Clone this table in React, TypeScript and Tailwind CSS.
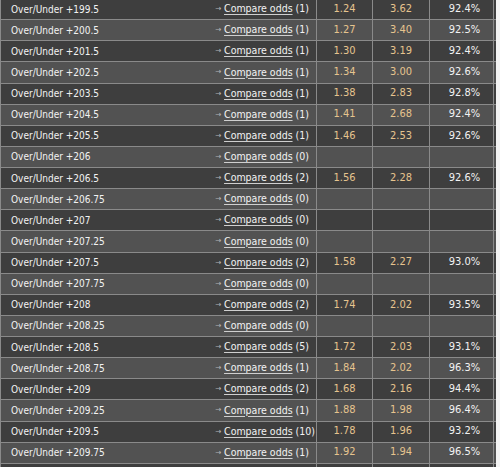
type Line = { pts: string; count: number; over?: string; under?: string; payout?: string };

const lines: Line[] = [
  { pts: "199.5", count: 1, over: "1.24", under: "3.62", payout: "92.4%" },
  { pts: "200.5", count: 1, over: "1.27", under: "3.40", payout: "92.5%" },
  { pts: "201.5", count: 1, over: "1.30", under: "3.19", payout: "92.4%" },
  { pts: "202.5", count: 1, over: "1.34", under: "3.00", payout: "92.6%" },
  { pts: "203.5", count: 1, over: "1.38", under: "2.83", payout: "92.8%" },
  { pts: "204.5", count: 1, over: "1.41", under: "2.68", payout: "92.4%" },
  { pts: "205.5", count: 1, over: "1.46", under: "2.53", payout: "92.6%" },
  { pts: "206", count: 0 },
  { pts: "206.5", count: 2, over: "1.56", under: "2.28", payout: "92.6%" },
  { pts: "206.75", count: 0 },
  { pts: "207", count: 0 },
  { pts: "207.25", count: 0 },
  { pts: "207.5", count: 2, over: "1.58", under: "2.27", payout: "93.0%" },
  { pts: "207.75", count: 0 },
  { pts: "208", count: 2, over: "1.74", under: "2.02", payout: "93.5%" },
  { pts: "208.25", count: 0 },
  { pts: "208.5", count: 5, over: "1.72", under: "2.03", payout: "93.1%" },
  { pts: "208.75", count: 1, over: "1.84", under: "2.02", payout: "96.3%" },
  { pts: "209", count: 2, over: "1.68", under: "2.16", payout: "94.4%" },
  { pts: "209.25", count: 1, over: "1.88", under: "1.98", payout: "96.4%" },
  { pts: "209.5", count: 10, over: "1.78", under: "1.96", payout: "93.2%" },
  { pts: "209.75", count: 1, over: "1.92", under: "1.94", payout: "96.5%" },
];

function OddsRow({ line, index }: { line?: Line; index: number }) {
  const bg = index % 2 === 0 ? "bg-[#3e3e3e]" : "bg-[#525252]";
  return (
    <div
      className={`grid h-[21.14px] grid-cols-[215px_101px_56px_57px_65px] border-b border-[#8a8a8a] ${bg}`}
    >
      <div className="flex items-center border-l border-[#8a8a8a] pl-[10px] text-[10px] text-[#f2f2f2]">
        {line && <>Over/Under +{line.pts}</>}
      </div>
      <div className="flex items-center whitespace-nowrap text-[10.5px] text-[#f2f2f2]">
        {line && (
          <>
            <span className="mr-[3px] text-[8px] text-[#b5b5b5]">&rarr;</span>
            <a href="#" className="underline decoration-[#cfcfcf] underline-offset-2">
              Compare odds
            </a>
            <span className="ml-[3px]">({line.count})</span>
          </>
        )}
      </div>
      <div className="flex items-center justify-center border-l border-[#8a8a8a] text-[#e6c48e]">
        {line?.over}
      </div>
      <div className="flex items-center justify-center border-l border-[#8a8a8a] text-[#e6c48e]">
        {line?.under}
      </div>
      <div className="flex items-center justify-center border-x border-[#8a8a8a] pl-[6px] text-[#f2f2f2]">
        {line?.payout}
      </div>
    </div>
  );
}

export default function App() {
  return (
    <div className="h-[467px] w-[500px] overflow-hidden bg-[#f4f4f4] font-['Tahoma','DejaVu_Sans_Condensed','Liberation_Sans',sans-serif] text-[11px]">
      <div className="-mt-[1px] w-[496px]">
        {lines.map((line, i) => (
          <OddsRow key={line.pts} line={line} index={i} />
        ))}
        <OddsRow index={lines.length} />
      </div>
    </div>
  );
}
